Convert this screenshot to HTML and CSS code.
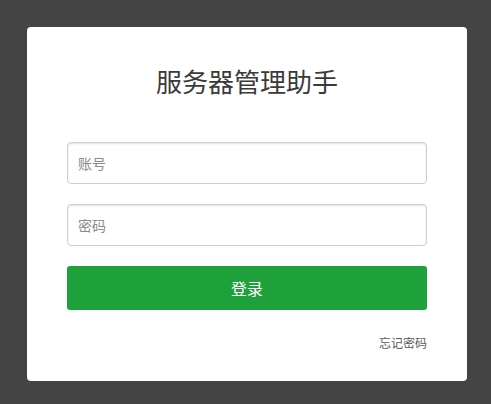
FILE: index.html
```html
<!DOCTYPE html>
<html lang="zh-CN">
<head>
<meta charset="utf-8">
<title>服务器管理助手</title>
<link rel="stylesheet" href="styles.css">
</head>
<body>
<div class="card">
  <h1 class="title">服务器管理助手</h1>
  <form class="form">
    <input class="field" type="text" placeholder="账号">
    <input class="field" type="password" placeholder="密码">
    <button class="btn" type="button">登录</button>
  </form>
  <div class="links"><a class="forgot" href="#">忘记密码</a></div>
</div>
</body>
</html>
```

FILE: styles.css
```css
html, body {
  margin: 0;
  padding: 0;
  background: #444444;
  height: 100%;
}
body {
  padding: 27px 24px 0 27px;
  box-sizing: border-box;
  font-family: "Noto Sans CJK SC", "Noto Sans", sans-serif;
}
.card {
  width: 440px;
  height: 354px;
  box-sizing: border-box;
  background: #fff;
  border-radius: 4px;
  padding: 36px 40px 0 40px;
}
.title {
  margin: 0;
  height: 36px;
  line-height: 36px;
  text-align: center;
  font-size: 26px;
  font-weight: 400;
  color: #3a3a3a;
}
.form {
  margin-top: 43px;
  display: flex;
  flex-direction: column;
  gap: 20px;
}
.field {
  display: block;
  width: 100%;
  height: 42px;
  box-sizing: border-box;
  border: 1px solid #cfcfcf;
  border-radius: 4px;
  box-shadow: inset 0 1px 2px rgba(0,0,0,0.12);
  padding: 0 10px;
  font-family: inherit;
  font-size: 14px;
  color: #333;
  outline: none;
}
.field::placeholder {
  color: #8a8a8a;
}
.btn {
  display: block;
  width: 100%;
  height: 44px;
  border: none;
  border-radius: 3px;
  background: #1ea03a;
  color: #fff;
  font-family: inherit;
  font-size: 16px;
  padding: 0;
}
.links {
  margin-top: 22px;
  text-align: right;
  line-height: 18px;
}
.forgot {
  font-size: 12px;
  color: #5a5a5a;
  text-decoration: none;
}
```
